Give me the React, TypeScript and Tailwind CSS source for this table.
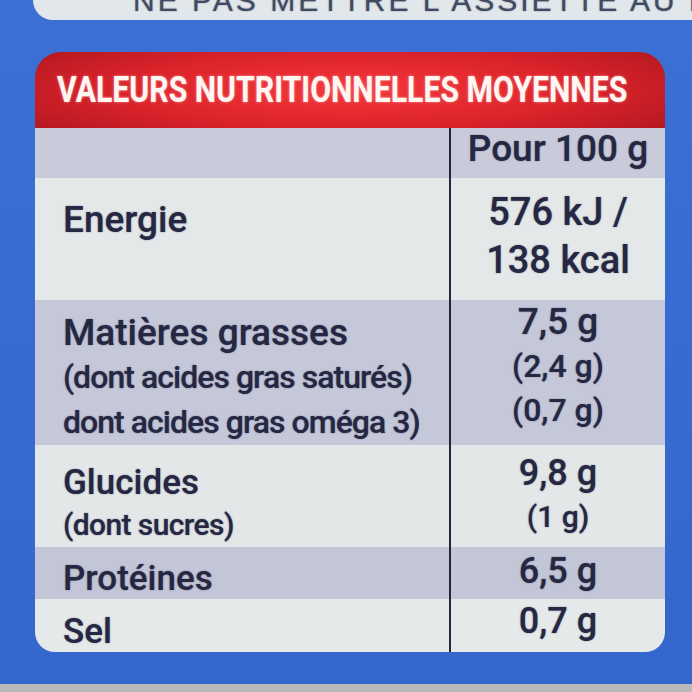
import React from 'react';

const Line: React.FC<{ className: string; children: React.ReactNode }> = ({ className, children }) => (
  <div className={`whitespace-nowrap ${className}`}>{children}</div>
);

const Row: React.FC<{
  className: string;
  leftPad: string;
  rightPad: string;
  left?: React.ReactNode;
  right: React.ReactNode;
}> = ({ className, leftPad, rightPad, left, right }) => (
  <div className={`grid grid-cols-[416px_1fr] ${className}`}>
    <div className={`border-r-2 border-[#23253b] pl-[28px] ${leftPad}`}>{left}</div>
    <div className={`text-center ${rightPad}`}>{right}</div>
  </div>
);

const App: React.FC = () => {
  return (
    <div className="flex h-[692px] w-[692px] flex-col overflow-hidden bg-[linear-gradient(180deg,#3c70d5,#3466cc)] font-['Roboto','Noto_Sans',sans-serif] font-medium text-[#262843] [text-shadow:0_0_1.5px_rgba(38,40,67,0.6)]">
      {/* bout de l'encart du dessus, coupé par le cadrage */}
      <div className="ml-[33px] h-[20px] shrink-0 overflow-hidden rounded-bl-[26px] bg-[#e2e7eb] pl-[100px]">
        <p className="-mt-[14px] whitespace-nowrap font-['Liberation_Sans',sans-serif] text-[30px] font-normal leading-[30px] tracking-[3px] text-[#414a63]">
          NE PAS METTRE L'ASSIETTE AU FOUR
        </p>
      </div>

      <div className="ml-[35px] mt-[32px] h-[76px] w-[630px] shrink-0 rounded-t-[26px] bg-[radial-gradient(ellipse_70%_95%_at_50%_50%,#f3373b_0%,#dd232b_50%,#a9151e_100%)] pl-[22px] pt-[20px]">
        <span className="inline-block origin-left scale-x-[0.84] whitespace-nowrap text-[36px] font-bold leading-[36px] text-[#fff6f2] [text-shadow:0_0_3px_rgba(255,190,190,0.7)]">
          VALEURS NUTRITIONNELLES MOYENNES
        </span>
      </div>

      <div className="ml-[35px] w-[630px] shrink-0 overflow-hidden rounded-b-[20px]">
        <Row
          className="h-[50px] bg-[#c9cbda]"
          leftPad="pt-0"
          rightPad="pt-[2px]"
          right={<Line className="text-[37px] leading-[38px]">Pour 100 g</Line>}
        />
        <Row
          className="h-[122px] bg-[#e4e8e9]"
          leftPad="pt-[22px]"
          rightPad="pt-[10px]"
          left={<Line className="text-[37px] leading-[40px]">Energie</Line>}
          right={
            <>
              <Line className="text-[38px] leading-[48px]">576 kJ /</Line>
              <Line className="text-[38px] leading-[48px]">138 kcal</Line>
            </>
          }
        />
        <Row
          className="h-[145px] bg-[#c5c8d9]"
          leftPad="pt-[10px]"
          rightPad="pt-0"
          left={
            <>
              <Line className="text-[37px] leading-[45px]">Matières grasses</Line>
              <Line className="text-[32px] leading-[45px] tracking-[-0.03em]">(dont acides gras saturés)</Line>
              <Line className="text-[32px] leading-[45px] tracking-[-0.03em]">dont acides gras oméga 3)</Line>
            </>
          }
          right={
            <>
              <Line className="text-[37px] leading-[44px]">7,5 g</Line>
              <Line className="text-[32px] leading-[44px]">(2,4 g)</Line>
              <Line className="text-[32px] leading-[44px]">(0,7 g)</Line>
            </>
          }
        />
        <Row
          className="h-[102px] bg-[#e3e7e7]"
          leftPad="pt-[17px]"
          rightPad="pt-[7px]"
          left={
            <>
              <Line className="text-[35px] leading-[42px]">Glucides</Line>
              <Line className="text-[30px] leading-[42px] tracking-[-0.02em]">(dont sucres)</Line>
            </>
          }
          right={
            <>
              <Line className="text-[36px] leading-[43px]">9,8 g</Line>
              <Line className="text-[30px] leading-[43px]">(1 g)</Line>
            </>
          }
        />
        <Row
          className="h-[52px] bg-[#c3c6d6]"
          leftPad="pt-[13px]"
          rightPad="pt-[4px]"
          left={<Line className="text-[35px] leading-[38px]">Protéines</Line>}
          right={<Line className="text-[36px] leading-[40px]">6,5 g</Line>}
        />
        <Row
          className="h-[53px] bg-[#e5e9e9]"
          leftPad="pt-[14px]"
          rightPad="pt-[2px]"
          left={<Line className="text-[35px] leading-[38px]">Sel</Line>}
          right={<Line className="text-[36px] leading-[40px]">0,7 g</Line>}
        />
      </div>

      <div className="flex-1" />
      <div className="h-[8px] shrink-0 bg-[#b8b7bb]" />
    </div>
  );
};

export default App;
